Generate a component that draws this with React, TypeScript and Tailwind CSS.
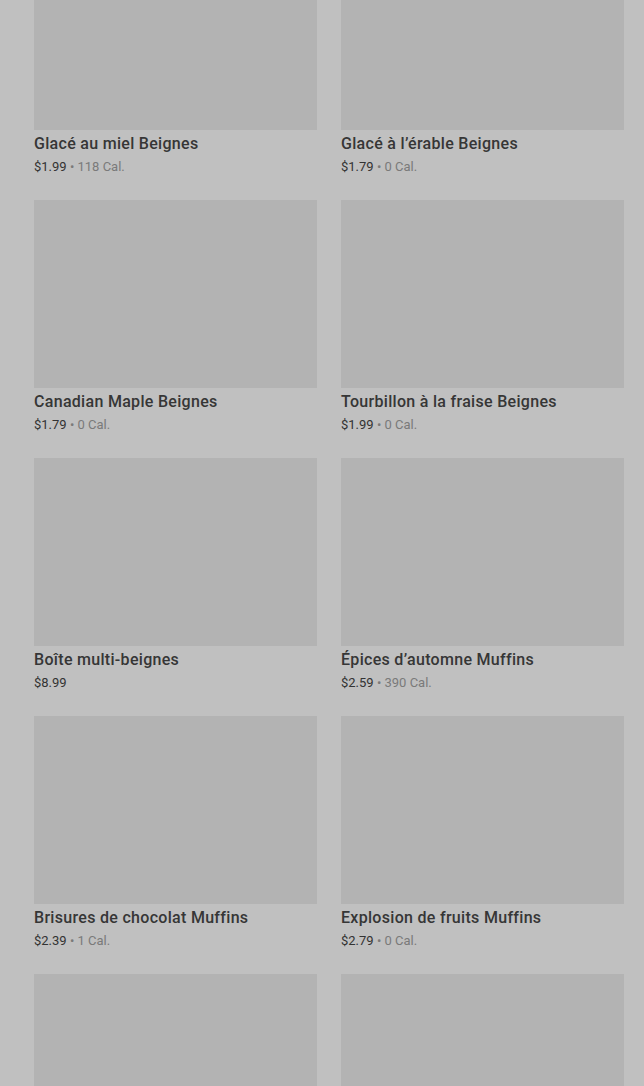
import React from 'react'

const ITEMS = [
    { name: 'Glacé au miel Beignes', price: '$1.99', cal: '118 Cal.' },
    { name: 'Glacé à l’érable Beignes', price: '$1.79', cal: '0 Cal.' },
    { name: 'Canadian Maple Beignes', price: '$1.79', cal: '0 Cal.' },
    { name: 'Tourbillon à la fraise Beignes', price: '$1.99', cal: '0 Cal.' },
    { name: 'Boîte multi-beignes', price: '$8.99', cal: '' },
    { name: 'Épices d’automne Muffins', price: '$2.59', cal: '390 Cal.' },
    { name: 'Brisures de chocolat Muffins', price: '$2.39', cal: '1 Cal.' },
    { name: 'Explosion de fruits Muffins', price: '$2.79', cal: '0 Cal.' },
]

export default function App() {
    const cards = ITEMS.map((item, index) => {
        return (
            <div key={index} className="flex flex-col">
                {/* first row is scrolled past its top edge */}
                <div className={index < 2 ? 'h-[130px] w-full bg-[#b3b3b3]' : 'h-[188px] w-full bg-[#b3b3b3]'} />
                <div className="mt-[4px] text-[16px] leading-[20px] font-medium text-[#363636] tracking-[0.3px]">
                    {item.name}
                </div>
                <div className="mt-[5px] text-[13px] leading-[16px] text-[#333333]">
                    {item.price}
                    {item.cal && (
                        <span className="text-[#7a7a7a]">
                            {' • '}
                            {item.cal}
                        </span>
                    )}
                </div>
            </div>
        )
    })

    return (
        <div className="h-[1086px] w-[644px] overflow-hidden bg-[#c0c0c0]" style={{ fontFamily: 'Roboto, "Noto Sans", sans-serif' }}>
            <div className="pl-[34px] pr-[20px] grid grid-cols-2 gap-x-[24px] gap-y-[25px]">
                {cards}
                <div className="h-[188px] bg-[#b3b3b3]" />
                <div className="h-[188px] bg-[#b3b3b3]" />
            </div>
        </div>
    )
}
